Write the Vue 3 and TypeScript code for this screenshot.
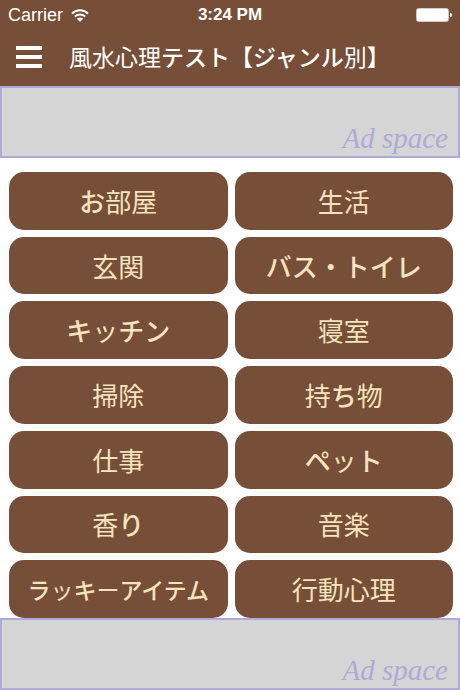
<script setup lang="ts">
interface Run {
  text: string
  kana: boolean
}

interface Genre {
  label: string
  compact?: boolean
}

const title = '風水心理テスト【ジャンル別】'

const genres: Genre[] = [
  { label: 'お部屋' },
  { label: '生活' },
  { label: '玄関' },
  { label: 'バス・トイレ' },
  { label: 'キッチン' },
  { label: '寝室' },
  { label: '掃除' },
  { label: '持ち物' },
  { label: '仕事' },
  { label: 'ペット' },
  { label: '香り' },
  { label: '音楽' },
  { label: 'ラッキーアイテム', compact: true },
  { label: '行動心理' },
]

// Full-size kana and brackets are set heavier than kanji, small tsu and the long-vowel mark.
const heavy = /[ぁ-んァ-ヺ・【】]/
const light = /[ッー]/

function runs(text: string): Run[] {
  const result: Run[] = []
  for (const char of text) {
    const kana = heavy.test(char) && !light.test(char)
    const last = result[result.length - 1]
    if (last && last.kana === kana) last.text += char
    else result.push({ text: char, kana })
  }
  return result
}
</script>

<template>
  <div class="screen">
    <header class="header">
      <div class="status">
        <div class="carrier">
          <span>Carrier</span>
          <svg class="wifi" viewBox="0 0 18 13" aria-hidden="true">
            <path d="M1 4.6a11.4 11.4 0 0 1 16 0" />
            <path d="M3.8 7.6a7.4 7.4 0 0 1 10.4 0" />
            <path class="dot" d="M9 13 5.8 9.8a4.6 4.6 0 0 1 6.4 0Z" />
          </svg>
        </div>
        <span class="time">3:24 PM</span>
        <svg class="battery" viewBox="0 0 36 14" aria-hidden="true">
          <rect class="shell" x="0.5" y="0.5" width="32" height="13" rx="2" />
          <rect x="1" y="1" width="31" height="12" rx="1" />
          <path d="M34 4.5q2 .5 2 2.5t-2 2.5Z" />
        </svg>
      </div>
      <div class="bar">
        <button class="menu" type="button" aria-label="メニュー">
          <svg viewBox="0 0 26 22" aria-hidden="true">
            <path d="M0 0h26v4H0zM0 9h26v4H0zM0 18h26v4H0z" />
          </svg>
        </button>
        <h1 class="title">
          <span v-for="(run, i) in runs(title)" :key="i" :class="{ kana: run.kana }">{{ run.text }}</span>
        </h1>
      </div>
    </header>

    <aside class="ad">Ad space</aside>

    <main class="genres">
      <button
        v-for="genre in genres"
        :key="genre.label"
        type="button"
        class="genre"
        :class="{ compact: genre.compact }"
      >
        <span v-for="(run, i) in runs(genre.label)" :key="i" :class="{ kana: run.kana }">{{ run.text }}</span>
      </button>
    </main>

    <aside class="ad">Ad space</aside>
  </div>
</template>

<style>
body {
  margin: 0;
  background: #fff;
}
</style>

<style scoped>
.screen {
  display: flex;
  flex-direction: column;
  min-height: 100vh;
  font-family: "Noto Sans CJK JP", sans-serif;
}

.header {
  background: #774e37;
  color: #fff;
}

.status {
  display: grid;
  grid-template-columns: 1fr auto 1fr;
  align-items: center;
  height: 30px;
  padding: 0 8px;
  font-family: "Liberation Sans", Arial, sans-serif;
  font-size: 17px;
  line-height: 20px;
}

.carrier {
  display: flex;
  align-items: center;
  gap: 8px;
  font-size: 18px;
}

.wifi {
  width: 18px;
  height: 13px;
  fill: none;
  stroke: #fff;
  stroke-width: 2;
}

.wifi .dot {
  fill: #fff;
  stroke: none;
}

.time {
  font-weight: bold;
}

.battery {
  justify-self: end;
  width: 36px;
  height: 14px;
  fill: #fff;
}

.battery .shell {
  fill: none;
  stroke: #d6c9c1;
}

.bar {
  display: flex;
  align-items: center;
  gap: 27px;
  height: 54px;
  padding: 0 16px 2px;
}

.menu {
  padding: 0;
  border: 0;
  background: none;
  cursor: pointer;
}

.menu svg {
  display: block;
  width: 26px;
  height: 22px;
  fill: #fff;
}

.title {
  margin: 0;
  padding-bottom: 2px;
  font-size: 23px;
  font-weight: 400;
  line-height: 32px;
  white-space: nowrap;
}

.kana {
  font-weight: 500;
}

.ad {
  display: flex;
  align-items: flex-end;
  justify-content: flex-end;
  box-sizing: border-box;
  height: 72px;
  padding: 0 10px 2px;
  border: 2px solid #afaad8;
  background: #d5d5d5;
  color: #afaad8;
  font-family: "Liberation Serif", "Times New Roman", serif;
  font-size: 29px;
  font-style: italic;
  line-height: 32px;
}

.genres {
  display: grid;
  flex: 1;
  grid-template-columns: 1fr 1fr;
  grid-auto-rows: 1fr;
  gap: 7px;
  padding: 14px 7px 0 9px;
}

.genre {
  min-height: 48px;
  padding: 0 8px;
  border: 0;
  border-radius: 15px;
  background: #774e37;
  color: #f4e3bd;
  font-family: inherit;
  font-size: 26px;
  line-height: 36px;
  white-space: nowrap;
  cursor: pointer;
}

.genre.compact {
  font-size: 23px;
}
</style>
